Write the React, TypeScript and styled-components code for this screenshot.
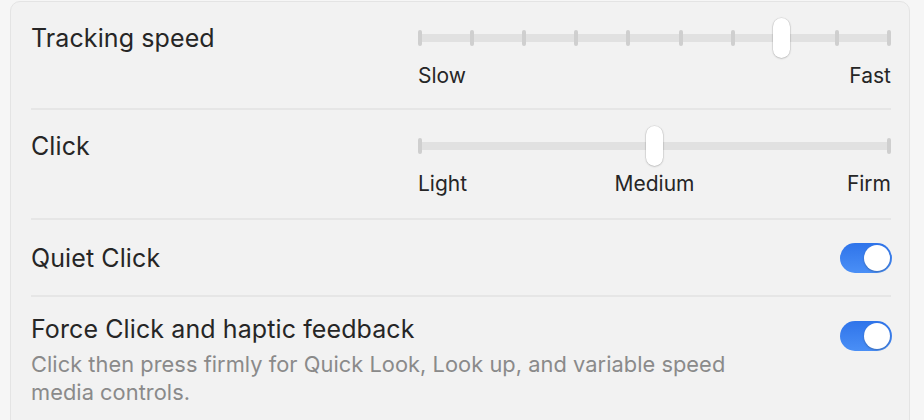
import React from "react";
import styled, { createGlobalStyle } from "styled-components";

const Global = createGlobalStyle`
  html, body { margin: 0; padding: 0; background: #f6f6f6; }
  body { font-family: "Inter", "Noto Sans", sans-serif; -webkit-font-smoothing: antialiased; }
`;

const Page = styled.div`
  padding: 1px 14px 0 10px;
  height: 419px;
  overflow: hidden;
`;

const Panel = styled.div`
  background: #f2f2f2;
  border: 1px solid #e4e4e4;
  border-radius: 10px;
  padding: 0 18px 0 20px;
  min-height: 480px;
`;

const Row = styled.div<{ $h: number; $center?: boolean }>`
  display: flex;
  justify-content: space-between;
  align-items: ${(p) => (p.$center ? "center" : "flex-start")};
  height: ${(p) => p.$h}px;
  box-sizing: border-box;
  padding-top: ${(p) => (p.$center ? 0 : 16)}px;
  & + & {
    border-top: 2px solid #e6e6e6;
  }
`;

const TopRow = styled(Row)`
  align-items: flex-start;
`;

const Title = styled.div`
  font-size: 25px;
  line-height: 40px;
  color: #262626;
  letter-spacing: 0.1px;
`;

const TextCol = styled.div`
  display: flex;
  flex-direction: column;
  padding-top: 12px;
`;

const Desc = styled.div`
  font-size: 21.8px;
  line-height: 28px;
  color: #8a8a8a;
  max-width: 720px;
  margin-top: 1px;
  letter-spacing: 0.05px;
`;

const SliderWrap = styled.div`
  width: 473px;
  display: flex;
  flex-direction: column;
`;

const TrackArea = styled.div`
  position: relative;
  height: 40px;
`;

const Track = styled.div`
  position: absolute;
  left: 0;
  right: 0;
  top: 16px;
  height: 8px;
  border-radius: 4px;
  background: #e1e1e1;
`;

const Tick = styled.div`
  position: absolute;
  top: 12px;
  width: 4px;
  height: 16px;
  border-radius: 2px;
  background: #cfcfcf;
`;

const Thumb = styled.div`
  position: absolute;
  top: 0;
  width: 17px;
  height: 40px;
  margin-left: -8.5px;
  border-radius: 9px;
  background: #ffffff;
  box-shadow: 0 0.5px 2px rgba(0, 0, 0, 0.28), 0 0 0 0.5px rgba(0, 0, 0, 0.08);
`;

const Labels = styled.div<{ $cols: number }>`
  display: grid;
  grid-template-columns: repeat(${(p) => p.$cols}, 1fr);
  margin-top: 5px;
  font-size: 21px;
  line-height: 26px;
  color: #262626;
  & > :first-child { text-align: left; }
  & > :last-child { text-align: right; }
  & > :nth-child(2):not(:last-child) { text-align: center; }
`;

const Switch = styled.div<{ $top?: number }>`
  width: 52px;
  height: 30px;
  border-radius: 15px;
  background: linear-gradient(180deg, #2f74ea 0%, #4a8ff6 100%);
  display: flex;
  align-items: center;
  justify-content: flex-end;
  padding: 2px;
  box-sizing: border-box;
  flex-shrink: 0;
  margin-top: ${(p) => p.$top ?? 0}px;
  margin-right: -1px;
`;

const Knob = styled.div`
  width: 26px;
  height: 26px;
  border-radius: 50%;
  background: #fff;
  box-shadow: 0 1px 2px rgba(0, 0, 0, 0.25);
`;

const Slider = ({
  ticks,
  value,
  labels,
}: {
  ticks: number;
  value: number;
  labels: string[];
}) => {
  const W = 473;
  const inner = W - 4;
  return (
    <SliderWrap>
      <TrackArea>
        <Track />
        {Array.from({ length: ticks }).map((_, i) => (
          <Tick key={i} style={{ left: (inner * i) / (ticks - 1) }} />
        ))}
        <Thumb style={{ left: 2 + inner * value }} />
      </TrackArea>
      <Labels $cols={labels.length}>
        {labels.map((l) => (
          <span key={l}>{l}</span>
        ))}
      </Labels>
    </SliderWrap>
  );
};

export default function App() {
  return (
    <>
      <Global />
      <Page>
        <Panel>
          <Row $h={106}>
            <Title>Tracking speed</Title>
            <Slider ticks={10} value={0.77} labels={["Slow", "Fast"]} />
          </Row>
          <Row $h={110}>
            <Title>Click</Title>
            <Slider ticks={2} value={0.5} labels={["Light", "Medium", "Firm"]} />
          </Row>
          <Row $h={77} $center>
            <Title>Quiet Click</Title>
            <Switch>
              <Knob />
            </Switch>
          </Row>
          <TopRow $h={140} $center>
            <TextCol>
              <Title>Force Click and haptic feedback</Title>
              <Desc>
                Click then press firmly for Quick Look, Look up, and variable speed
                media controls.
              </Desc>
            </TextCol>
            <Switch $top={24}>
              <Knob />
            </Switch>
          </TopRow>
        </Panel>
      </Page>
    </>
  );
}
